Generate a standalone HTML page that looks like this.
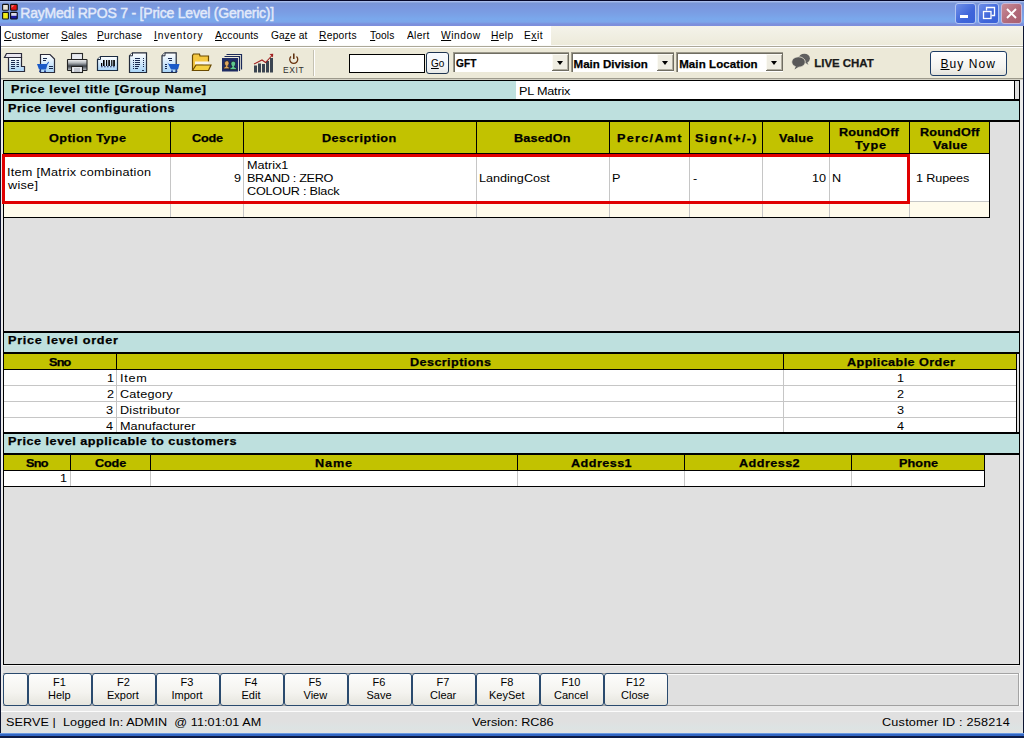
<!DOCTYPE html>
<html><head><meta charset="utf-8">
<style>
*{margin:0;padding:0;box-sizing:border-box}
html,body{width:1024px;height:738px;overflow:hidden;background:#e0e0e0;font-family:"Liberation Sans",sans-serif;font-size:11px;color:#000}
.a{position:absolute}
.x{position:absolute;white-space:pre;line-height:20px}
.blk{position:absolute;background:#000}
.gry{position:absolute;background:#c6c6c6}
.fk{position:absolute;top:673px;height:33px;width:64px;border:1px solid #2a4a6e;border-radius:3px;background:linear-gradient(#fdfdfc,#f4f3ef 60%,#e6e5de)}
.cb{position:absolute;top:52px;height:20px;background:#fff;border-top:1px solid #9c998b;border-left:1px solid #9c998b;box-shadow:inset 1px 1px 0 #6f6d62}
.cbb{position:absolute;top:1px;right:0;width:17px;height:17px;background:#efede2;box-shadow:inset -1px -1px 0 #6f6d62,inset 1px 1px 0 #fbfaf4,inset -2px -2px 0 #b0ad9f}
.cbb:after{content:"";position:absolute;left:5px;top:7px;border-left:3.5px solid transparent;border-right:3.5px solid transparent;border-top:4px solid #000}
</style></head><body>
<div class="a" style="left:0px;top:0px;width:1024px;height:738px;background:#e0e0e0;"></div>
<div class="a" style="left:0px;top:0px;width:1px;height:738px;background:#0c1430;"></div>
<div class="a" style="left:1px;top:26px;width:2px;height:707px;background:#ebebeb;"></div>
<div class="a" style="left:1023px;top:0px;width:1px;height:738px;background:#0c1430;"></div>
<div class="a" style="left:1020px;top:26px;width:3px;height:707px;background:#ebebeb;"></div>
<div class="a" style="left:0px;top:733px;width:1024px;height:1px;background:#6a98e0;"></div>
<div class="a" style="left:0px;top:734px;width:1024px;height:2px;background:#3266c4;"></div>
<div class="a" style="left:0px;top:736px;width:1024px;height:2px;background:#0c1a44;"></div>
<div class="a" style="left:0px;top:0px;width:1024px;height:26px;background:linear-gradient(#06082a 0px,#06082a 1px,#a8bcec 1px,#a8bcec 2px,#8ca6de 2.5px,#7a96d8 3.5px,#7a98e0 8px,#7a9ee4 13px,#7aa8ec 19px,#7ca6ea 22px,#7c90dc 24px,#7c8edc 26px);"></div>
<div class="a" style="left:1px;top:26px;width:1022px;height:21px;background:linear-gradient(#f4f3ea,#ece9d8);"></div>
<div class="a" style="left:1px;top:26px;width:550px;height:19px;background:#fff;"></div>
<div class="a" style="left:1px;top:45px;width:1022px;height:1px;background:#fbfbf8;"></div>
<div class="a" style="left:1px;top:46px;width:1022px;height:1px;background:#aca899;"></div>
<div class="a" style="left:1px;top:47px;width:1022px;height:1px;background:#fff;"></div>
<div class="a" style="left:1px;top:48px;width:1022px;height:31px;background:#ece9d8;"></div>
<div class="a" style="left:1px;top:78px;width:1022px;height:1px;background:#9d9a8c;"></div>
<div class="a" style="left:1px;top:79px;width:1022px;height:1px;background:#d4d2c6;"></div>
<div class="a" style="left:313px;top:50px;width:1px;height:26px;background:#c5c2b2;"></div>
<div class="a" style="left:314px;top:50px;width:1px;height:26px;background:#fff;"></div>
<div class="a" style="left:349px;top:54px;width:76px;height:19px;background:#fff;border:1px solid #000"></div>
<div class="a" style="left:426px;top:52px;width:23px;height:22px;border:1px solid #1e3450;border-radius:3px;background:linear-gradient(#f8fbff,#f2f4f6 70%,#e6e8e6)"></div>
<div class="cb" style="left:453px;width:116px"><div class="cbb"></div></div>
<div class="cb" style="left:571px;width:103px"><div class="cbb"></div></div>
<div class="cb" style="left:676px;width:107px"><div class="cbb"></div></div>
<div class="a" style="left:930px;top:51px;width:77px;height:25px;border:1px solid #1f3d66;border-radius:3px;background:linear-gradient(#fff,#f3f2ee 70%,#e2e1da)"></div>
<!-- app icon -->
<svg class="a" style="left:0;top:0" width="20" height="22" viewBox="0 0 20 22">
<rect x="2.6" y="4.4" width="5.8" height="5.8" rx="0.8" fill="#eae4d8" stroke="#111" stroke-width="1.1"/>
<rect x="10.6" y="4.4" width="6.6" height="5.8" rx="0.8" fill="#e01010" stroke="#111" stroke-width="1.1"/>
<path d="M11.5 5.3h3L11.5 8Z" fill="#f08080"/>
<rect x="2.6" y="12.4" width="5.8" height="6.6" rx="0.8" fill="#f0ec18" stroke="#111" stroke-width="1.1"/>
<rect x="10.6" y="12.4" width="6.6" height="6.6" rx="0.8" fill="#1a1aa0" stroke="#111" stroke-width="1.1"/>
<rect x="11.2" y="13" width="5.4" height="2.8" fill="#dcdce8"/>
</svg>
<!-- title buttons -->
<div class="a" style="left:955px;top:3px;width:21px;height:21px;border:1px solid #b4c6f2;border-radius:3px;background:linear-gradient(135deg,#6f8fe8,#3f66da 60%,#3a62d8)"></div>
<div class="a" style="left:960px;top:15px;width:8px;height:3px;background:#fff"></div>
<div class="a" style="left:978px;top:3px;width:21px;height:21px;border:1px solid #b4c6f2;border-radius:3px;background:linear-gradient(135deg,#6f8fe8,#3f66da 60%,#3a62d8)"></div>
<svg class="a" style="left:978px;top:3px" width="21" height="21" viewBox="0 0 21 21"><path d="M8.5 7.5V4.5H16.5V12.5H13.5" fill="none" stroke="#fff" stroke-width="1.3"/><rect x="5.5" y="8.5" width="7.5" height="7" fill="none" stroke="#fff" stroke-width="1.3"/></svg>
<div class="a" style="left:1001px;top:3px;width:21px;height:21px;border:1px solid #c8b8d8;border-radius:3px;background:linear-gradient(135deg,#c88c98,#b06878 60%,#a86070)"></div>
<svg class="a" style="left:1001px;top:3px" width="21" height="21" viewBox="0 0 21 21"><path d="M6 6L15 15M15 6L6 15" stroke="#fff" stroke-width="1.9"/></svg>

<!-- toolbar icons -->
<svg class="a" style="left:0;top:46px" width="320" height="32" viewBox="0 46 320 32">
<defs>
<linearGradient id="gb" x1="0" y1="0" x2="0" y2="1"><stop offset="0" stop-color="#ffffff"/><stop offset="1" stop-color="#a8d4f8"/></linearGradient>
<linearGradient id="gp" x1="0" y1="0" x2="0" y2="1"><stop offset="0" stop-color="#f4f4f4"/><stop offset="0.3" stop-color="#b4b8bc"/><stop offset="0.6" stop-color="#3c424a"/><stop offset="1" stop-color="#c4c8cc"/></linearGradient>
</defs>
<!-- icon1 scroll -->
<path d="M8.5 57.5H21.5V66.5H24.5V71.5H8.5Z" fill="url(#gb)" stroke="#2a2a3a" stroke-width="1.2"/>
<path d="M6.5 53.5H21.5L21.5 57.5L19 57.5H4.5Z" fill="#e8e6f0" stroke="#2a2a3a" stroke-width="1.2"/>
<g stroke="#1a2a50" stroke-width="1"><path d="M11 60.5h4M16.5 60.5h2.5M11 62.5h4M16.5 62.5h2.5M11 64.5h4M16.5 64.5h2.5M11 66.5h4M16.5 66.5h2.5M11 68.5h4"/></g>
<!-- icon2 doc+cart -->
<path d="M40.5 54.5H50L54.5 59V72.5H40.5Z" fill="url(#gb)" stroke="#2a2a3a" stroke-width="1.2"/>
<g stroke="#1a2a50"><path d="M43 58.5h4M43 60.5h3M49 66.5h4M49 68.5h4"/></g>
<path d="M37 64H46.5L48.5 61.5L49 62.5L47.5 64.5L46 69.5H39Z" fill="#1a5ac8"/>
<circle cx="40" cy="71.3" r="1" fill="#1a3a90"/><circle cx="45" cy="71.3" r="1" fill="#1a3a90"/>
<!-- icon3 printer -->
<rect x="71.5" y="53.5" width="11" height="6.5" fill="#e8eaf0" stroke="#2a2a2a" stroke-width="1.1"/>
<rect x="67.5" y="59.5" width="19.5" height="11" rx="0.5" fill="url(#gp)" stroke="#222" stroke-width="1.1"/>
<rect x="71.5" y="66.5" width="11" height="6" fill="#eef0f4" stroke="#222" stroke-width="1.1"/>
<path d="M74 69h6M74 71h6" stroke="#8890a0" stroke-width="0.8"/>
<!-- icon4 barcode -->
<path d="M100.5 56.5H117.5V70.5H97.5V59.5Z" fill="url(#gb)" stroke="#1a2a40" stroke-width="1.2"/>
<path d="M97.5 59.5H100.5V56.5" fill="#fff" stroke="#1a2a40" stroke-width="1"/>
<g fill="#000"><rect x="101" y="63" width="1.2" height="3"/><rect x="103" y="60" width="1.6" height="6"/><rect x="106" y="60" width="1.2" height="6"/><rect x="108.3" y="60" width="1.6" height="6"/><rect x="111.2" y="60" width="1.2" height="6"/><rect x="113.2" y="60" width="1.7" height="6"/></g>
<path d="M101 66.8h14" stroke="#1a2a60" stroke-width="1.1" stroke-dasharray="1.6 1.4"/>
<!-- icon5 doc list -->
<path d="M132.5 52.8H146.5V72.5H129.5V55.8Z" fill="url(#gb)" stroke="#222a3a" stroke-width="1.2"/>
<path d="M129.5 55.8H132.5V52.8" fill="#fff" stroke="#222a3a" stroke-width="1"/>
<g stroke="#1a2a50"><path d="M135 58.5h5M135 60.5h5M135 62.5h5M135 64.5h5M135 66.5h4M135 68.5h3"/><path d="M133 60.5h1M133 62.5h1M133 64.5h1M133 66.5h1M133 68.5h1M143 58.5h1M143 60.5h1M143 62.5h1M143 64.5h1M143 66.5h1M142 70.5h2"/></g>
<!-- icon6 doc+cart -->
<path d="M165 52.8H176.2V72.5H162V55.8Z" fill="url(#gb)" stroke="#222a3a" stroke-width="1.2"/>
<path d="M162 55.8H165V52.8" fill="#fff" stroke="#222a3a" stroke-width="1"/>
<g stroke="#1a2a50"><path d="M168 58.5h4M169 60.5h3M165 64.5h2M165 66.5h2M165 68.5h2"/></g>
<path d="M167.5 62.5L169 64H179.5L178 69.5H171Z" fill="#1a5ac8"/>
<circle cx="172" cy="71.3" r="1" fill="#1a3a90"/><circle cx="176.5" cy="71.3" r="1" fill="#1a3a90"/>
<!-- icon7 folder -->
<path d="M192.5 70.5V55.5L193.5 54H199.5L200 56H208.5V61.5" fill="#f5c842" stroke="#6a4a00" stroke-width="1.2"/>
<path d="M195 61.5H208.5V64.5H195Z" fill="#f8f4ec"/>
<path d="M192.5 70.5L196 65H211L208.5 70.5Z" fill="#f5d040" stroke="#6a4a00" stroke-width="1.2"/>
<!-- icon8 contacts -->
<path d="M226.5 54.5H241.5V69.5" fill="none" stroke="#1c2a5a" stroke-width="1.2"/>
<path d="M224.5 56.5H239.5V71" fill="none" stroke="#1c2a5a" stroke-width="1.2"/>
<rect x="222" y="58" width="16" height="13.5" fill="#1e2c66"/>
<path d="M227 60.8C225.4 60.8 224.6 62 224.6 63.4C224.6 64.6 225.2 65.4 225.8 65.8L225.6 66.6C224.6 66.8 223.6 67.6 223.4 68.8H229.8C229.6 67.6 228.6 66.8 227.8 66.6L227.6 65.8C228.4 65.4 229 64.6 229 63.4C229 62 228.4 60.8 227 60.8Z" fill="#e0a860" stroke="#101010" stroke-width="0.6"/>
<path d="M233.2 61.2C231.6 61.2 230.9 62.4 230.9 63.8C230.9 65 231.5 65.8 232.1 66.2L231.9 67.2C230.8 67.4 229.8 68.2 229.6 69.6H236.8C236.6 68.2 235.6 67.4 234.5 67.2L234.3 66.2C235 65.8 235.6 65 235.6 63.8C235.6 62.4 234.9 61.2 233.2 61.2Z" fill="#5cc890" stroke="#101010" stroke-width="0.6"/>
<!-- icon9 chart -->
<g fill="#3a4450"><rect x="254" y="65.5" width="3" height="7"/><rect x="258" y="63.5" width="3" height="9"/><rect x="262" y="64" width="3" height="8.5"/><rect x="266" y="61" width="3" height="11.5"/><rect x="270" y="58" width="3" height="14.5"/></g>
<path d="M254 64L262 60L265.5 62.5L272 55.5" fill="none" stroke="#a02020" stroke-width="1.1"/>
<path d="M269.5 54L273.2 53.8L273 57.5Z" fill="#a02020"/>
<!-- icon10 exit -->
<path d="M291 56.5A4 4 0 1 0 296.5 56.5" fill="none" stroke="#6a3410" stroke-width="1.3"/>
<path d="M293.8 53.5V59" stroke="#5a2a08" stroke-width="1.5"/>
</svg>
<!-- chat icon -->
<svg class="a" style="left:790px;top:52px" width="22" height="20" viewBox="0 0 22 20">
<ellipse cx="14.3" cy="6.5" rx="5.6" ry="4.8" fill="#606060"/>
<path d="M17 10L18.5 13L15 10.5Z" fill="#606060"/>
<ellipse cx="8.5" cy="10" rx="6.8" ry="5.2" fill="#585858" stroke="#ece9d8" stroke-width="0.8"/>
<path d="M6 14L4.5 17.5L9 14.5Z" fill="#585858"/>
</svg>


<div class="blk" style="left:3px;top:80px;width:1017px;height:1px"></div>
<div class="blk" style="left:3px;top:80px;width:1px;height:585px"></div>
<div class="blk" style="left:1019px;top:80px;width:1px;height:585px"></div>
<div class="blk" style="left:3px;top:664px;width:1017px;height:1px"></div>
<div class="a" style="left:4px;top:81px;width:512px;height:18px;background:#bee0de;"></div>
<div class="a" style="left:516px;top:81px;width:498px;height:18px;background:#fff;"></div>
<div class="blk" style="left:1014px;top:81px;width:1px;height:18px"></div>
<div class="a" style="left:1015px;top:81px;width:4px;height:18px;background:#e0e0e0;"></div>
<div class="blk" style="left:3px;top:99px;width:1017px;height:2px"></div>
<div class="a" style="left:4px;top:101px;width:1015px;height:19px;background:#bee0de;"></div>
<div class="blk" style="left:3px;top:120px;width:1017px;height:2px"></div>
<div class="a" style="left:4px;top:122px;width:985px;height:31px;background:#c2c200;"></div>
<div class="blk" style="left:170px;top:122px;width:1px;height:32px"></div>
<div class="blk" style="left:243px;top:122px;width:1px;height:32px"></div>
<div class="blk" style="left:476px;top:122px;width:1px;height:32px"></div>
<div class="blk" style="left:609px;top:122px;width:1px;height:32px"></div>
<div class="blk" style="left:689px;top:122px;width:1px;height:32px"></div>
<div class="blk" style="left:762px;top:122px;width:1px;height:32px"></div>
<div class="blk" style="left:829px;top:122px;width:1px;height:32px"></div>
<div class="blk" style="left:909px;top:122px;width:1px;height:32px"></div>
<div class="blk" style="left:989px;top:122px;width:1px;height:32px"></div>
<div class="blk" style="left:3px;top:153px;width:987px;height:1px"></div>
<div class="a" style="left:4px;top:154px;width:985px;height:47px;background:#fff;"></div>
<div class="a" style="left:4px;top:202px;width:985px;height:15px;background:#fffbec;"></div>
<div class="gry" style="left:170px;top:154px;width:1px;height:63px"></div>
<div class="gry" style="left:243px;top:154px;width:1px;height:63px"></div>
<div class="gry" style="left:476px;top:154px;width:1px;height:63px"></div>
<div class="gry" style="left:609px;top:154px;width:1px;height:63px"></div>
<div class="gry" style="left:689px;top:154px;width:1px;height:63px"></div>
<div class="gry" style="left:762px;top:154px;width:1px;height:63px"></div>
<div class="gry" style="left:829px;top:154px;width:1px;height:63px"></div>
<div class="gry" style="left:909px;top:154px;width:1px;height:63px"></div>
<div class="gry" style="left:4px;top:201px;width:985px;height:1px"></div>
<div class="blk" style="left:989px;top:121px;width:1px;height:97px"></div>
<div class="blk" style="left:3px;top:217px;width:987px;height:1px"></div>
<div class="a" style="left:2px;top:154px;width:908px;height:50px;border:3px solid #e00000"></div>
<div class="blk" style="left:3px;top:331px;width:1017px;height:2px"></div>
<div class="a" style="left:4px;top:333px;width:1015px;height:19px;background:#bee0de;"></div>
<div class="blk" style="left:3px;top:352px;width:1017px;height:2px"></div>
<div class="a" style="left:4px;top:354px;width:1012px;height:15px;background:#c2c200;"></div>
<div class="blk" style="left:116px;top:354px;width:1px;height:15px"></div>
<div class="blk" style="left:783px;top:354px;width:1px;height:15px"></div>
<div class="blk" style="left:1016px;top:354px;width:1px;height:15px"></div>
<div class="blk" style="left:3px;top:369px;width:1014px;height:1px"></div>
<div class="a" style="left:4px;top:370px;width:1012px;height:62px;background:#fff;"></div>
<div class="gry" style="left:4px;top:385px;width:1012px;height:1px"></div>
<div class="gry" style="left:4px;top:401px;width:1012px;height:1px"></div>
<div class="gry" style="left:4px;top:417px;width:1012px;height:1px"></div>
<div class="gry" style="left:116px;top:370px;width:1px;height:62px"></div>
<div class="gry" style="left:783px;top:370px;width:1px;height:62px"></div>
<div class="blk" style="left:1016px;top:353px;width:1px;height:80px"></div>
<div class="blk" style="left:3px;top:432px;width:1017px;height:2px"></div>
<div class="a" style="left:4px;top:434px;width:1015px;height:19px;background:#bee0de;"></div>
<div class="blk" style="left:3px;top:453px;width:1017px;height:2px"></div>
<div class="a" style="left:4px;top:455px;width:980px;height:15px;background:#c2c200;"></div>
<div class="blk" style="left:70px;top:455px;width:1px;height:15px"></div>
<div class="blk" style="left:150px;top:455px;width:1px;height:15px"></div>
<div class="blk" style="left:517px;top:455px;width:1px;height:15px"></div>
<div class="blk" style="left:684px;top:455px;width:1px;height:15px"></div>
<div class="blk" style="left:851px;top:455px;width:1px;height:15px"></div>
<div class="blk" style="left:984px;top:455px;width:1px;height:15px"></div>
<div class="blk" style="left:3px;top:470px;width:982px;height:1px"></div>
<div class="a" style="left:4px;top:471px;width:980px;height:15px;background:#fff;"></div>
<div class="gry" style="left:70px;top:471px;width:1px;height:15px"></div>
<div class="gry" style="left:150px;top:471px;width:1px;height:15px"></div>
<div class="gry" style="left:517px;top:471px;width:1px;height:15px"></div>
<div class="gry" style="left:684px;top:471px;width:1px;height:15px"></div>
<div class="gry" style="left:851px;top:471px;width:1px;height:15px"></div>
<div class="blk" style="left:984px;top:454px;width:1px;height:33px"></div>
<div class="blk" style="left:3px;top:486px;width:982px;height:1px"></div>
<div class="a" style="left:3px;top:665px;width:1016px;height:1px;background:#f4f4f4;"></div>
<div class="a" style="left:3px;top:673px;width:1016px;height:1px;background:#a4a4a4;"></div>
<div class="a" style="left:3px;top:674px;width:1016px;height:1px;background:#fafafa;"></div>
<div class="a" style="left:1018px;top:673px;width:1px;height:33px;background:#a4a4a4;"></div>
<div class="a" style="left:1019px;top:673px;width:1px;height:34px;background:#fafafa;"></div>
<div class="a" style="left:3px;top:705px;width:1016px;height:1px;background:#a0a0a0;"></div>
<div class="a" style="left:3px;top:706px;width:1017px;height:5px;background:#e8e8e8;"></div>
<div class="fk" style="left:3px;width:25px"></div>
<div class="fk" style="left:28px"></div>
<div class="fk" style="left:92px"></div>
<div class="fk" style="left:156px"></div>
<div class="fk" style="left:220px"></div>
<div class="fk" style="left:284px"></div>
<div class="fk" style="left:348px"></div>
<div class="fk" style="left:412px"></div>
<div class="fk" style="left:476px"></div>
<div class="fk" style="left:540px"></div>
<div class="fk" style="left:604px"></div>
<div class="a" style="left:1px;top:711px;width:1022px;height:1px;background:#fcfcfc;"></div>
<div class="a" style="left:1px;top:712px;width:1022px;height:21px;background:linear-gradient(#e0e0e0 0,#e0e0e0 10px,#dde3e3 16px,#e2e2e0 21px);"></div>
<div class="x" style="left:20.30px;top:3.00px;font-size:14px;color:#e2eafa;letter-spacing:-0.213px;-webkit-text-stroke:0.45px #e2eafa;">RayMedi RPOS 7 - [Price Level (Generic)]</div>
<div class="x" style="left:3.90px;top:25.00px;font-size:11px;letter-spacing:0.138px;transform:scaleX(0.93);transform-origin:0 0;"><u>C</u>ustomer</div>
<div class="x" style="left:60.80px;top:25.00px;font-size:11px;letter-spacing:0.161px;transform:scaleX(0.93);transform-origin:0 0;"><u>S</u>ales</div>
<div class="x" style="left:97.40px;top:25.00px;font-size:11px;letter-spacing:0.276px;transform:scaleX(0.93);transform-origin:0 0;"><u>P</u>urchase</div>
<div class="x" style="left:153.70px;top:25.00px;font-size:11px;letter-spacing:0.874px;transform:scaleX(0.93);transform-origin:0 0;"><u>I</u>nventory</div>
<div class="x" style="left:215.00px;top:25.00px;font-size:11px;letter-spacing:0.215px;transform:scaleX(0.93);transform-origin:0 0;"><u>A</u>ccounts</div>
<div class="x" style="left:270.60px;top:25.00px;font-size:11px;letter-spacing:0.108px;transform:scaleX(0.93);transform-origin:0 0;">Ga<u>z</u>e at</div>
<div class="x" style="left:319.20px;top:25.00px;font-size:11px;letter-spacing:0.305px;transform:scaleX(0.93);transform-origin:0 0;"><u>R</u>eports</div>
<div class="x" style="left:370.00px;top:25.00px;font-size:11px;letter-spacing:0.134px;transform:scaleX(0.93);transform-origin:0 0;"><u>T</u>ools</div>
<div class="x" style="left:406.80px;top:25.00px;font-size:11px;letter-spacing:0.323px;transform:scaleX(0.93);transform-origin:0 0;">Alert</div>
<div class="x" style="left:441.30px;top:25.00px;font-size:11px;letter-spacing:0.581px;transform:scaleX(0.93);transform-origin:0 0;"><u>W</u>indow</div>
<div class="x" style="left:490.60px;top:25.00px;font-size:11px;letter-spacing:0.394px;transform:scaleX(0.93);transform-origin:0 0;"><u>H</u>elp</div>
<div class="x" style="left:523.60px;top:25.00px;font-size:11px;letter-spacing:0.573px;transform:scaleX(0.93);transform-origin:0 0;">E<u>x</u>it</div>
<div class="x" style="left:282.90px;top:60.00px;font-size:8.5px;color:#303030;letter-spacing:0.6px;">EXIT</div>
<div class="x" style="left:455.80px;top:53.00px;font-size:11.5px;font-weight:bold;-webkit-text-stroke:0.25px;letter-spacing:0.114px;transform:scaleX(0.88);transform-origin:0 0;">GFT</div>
<div class="x" style="left:573.60px;top:53.50px;font-size:11.5px;font-weight:bold;-webkit-text-stroke:0.25px;">Main Division</div>
<div class="x" style="left:679.20px;top:53.50px;font-size:11.5px;font-weight:bold;-webkit-text-stroke:0.25px;letter-spacing:0.092px;">Main Location</div>
<div class="x" style="left:814.30px;top:52.60px;font-size:11.5px;font-weight:bold;-webkit-text-stroke:0.25px;color:#1a1a1a;letter-spacing:-0.05px;">LIVE CHAT</div>
<div class="x" style="left:940.50px;top:53.50px;font-size:12px;letter-spacing:1.067px;"><u>B</u>uy Now</div>
<div class="x" style="left:431.00px;top:54.00px;font-size:10px;"><u>G</u>o</div>
<div class="x" style="left:10.80px;top:79.30px;font-size:11.5px;font-weight:bold;-webkit-text-stroke:0.25px;letter-spacing:0.583px;transform:scaleX(1.1);transform-origin:0 0;">Price level title [Group Name]</div>
<div class="x" style="left:518.90px;top:80.90px;font-size:11.5px;letter-spacing:-0.182px;transform:scaleX(1.1);transform-origin:0 0;">PL Matrix</div>
<div class="x" style="left:7.60px;top:97.80px;font-size:11.5px;font-weight:bold;-webkit-text-stroke:0.25px;letter-spacing:0.458px;transform:scaleX(1.1);transform-origin:0 0;">Price level configurations</div>
<div class="x" style="left:48.80px;top:128.00px;font-size:11.5px;font-weight:bold;-webkit-text-stroke:0.25px;letter-spacing:0.373px;transform:scaleX(1.1);transform-origin:0 0;">Option Type</div>
<div class="x" style="left:191.50px;top:128.00px;font-size:11.5px;font-weight:bold;-webkit-text-stroke:0.25px;letter-spacing:-0.152px;transform:scaleX(1.1);transform-origin:0 0;">Code</div>
<div class="x" style="left:322.40px;top:128.00px;font-size:11.5px;font-weight:bold;-webkit-text-stroke:0.25px;letter-spacing:0.427px;transform:scaleX(1.1);transform-origin:0 0;">Description</div>
<div class="x" style="left:514.10px;top:128.00px;font-size:11.5px;font-weight:bold;-webkit-text-stroke:0.25px;letter-spacing:0.136px;transform:scaleX(1.1);transform-origin:0 0;">BasedOn</div>
<div class="x" style="left:617.00px;top:128.00px;font-size:11.5px;font-weight:bold;-webkit-text-stroke:0.25px;letter-spacing:1.169px;transform:scaleX(1.1);transform-origin:0 0;">Perc/Amt</div>
<div class="x" style="left:695.40px;top:128.00px;font-size:11.5px;font-weight:bold;-webkit-text-stroke:0.25px;letter-spacing:1.205px;transform:scaleX(1.1);transform-origin:0 0;">Sign(+/-)</div>
<div class="x" style="left:779.00px;top:128.00px;font-size:11.5px;font-weight:bold;-webkit-text-stroke:0.25px;letter-spacing:0.273px;transform:scaleX(1.1);transform-origin:0 0;">Value</div>
<div class="x" style="left:839.00px;top:122.00px;font-size:11.5px;font-weight:bold;-webkit-text-stroke:0.25px;letter-spacing:0.195px;transform:scaleX(1.1);transform-origin:0 0;">RoundOff</div>
<div class="x" style="left:854.60px;top:135.00px;font-size:11.5px;font-weight:bold;-webkit-text-stroke:0.25px;letter-spacing:0.727px;transform:scaleX(1.1);transform-origin:0 0;">Type</div>
<div class="x" style="left:919.50px;top:122.00px;font-size:11.5px;font-weight:bold;-webkit-text-stroke:0.25px;letter-spacing:0.156px;transform:scaleX(1.1);transform-origin:0 0;">RoundOff</div>
<div class="x" style="left:932.90px;top:135.00px;font-size:11.5px;font-weight:bold;-webkit-text-stroke:0.25px;letter-spacing:0.295px;transform:scaleX(1.1);transform-origin:0 0;">Value</div>
<div class="x" style="left:6.80px;top:162.00px;font-size:11.5px;letter-spacing:0.245px;transform:scaleX(1.1);transform-origin:0 0;">Item [Matrix combination</div>
<div class="x" style="left:7.80px;top:175.00px;font-size:11.5px;letter-spacing:0.245px;transform:scaleX(1.1);transform-origin:0 0;">wise]</div>
<div class="x" style="left:233.60px;top:168.00px;font-size:11.5px;transform:scaleX(1.1);transform-origin:0 0;">9</div>
<div class="x" style="left:246.80px;top:155.00px;font-size:11.5px;letter-spacing:-0.03px;transform:scaleX(1.1);transform-origin:0 0;">Matrix1</div>
<div class="x" style="left:246.80px;top:168.00px;font-size:11.5px;letter-spacing:-0.298px;transform:scaleX(1.1);transform-origin:0 0;">BRAND : ZERO</div>
<div class="x" style="left:246.80px;top:180.60px;font-size:11.5px;letter-spacing:-0.21px;transform:scaleX(1.1);transform-origin:0 0;">COLOUR : Black</div>
<div class="x" style="left:479.20px;top:168.00px;font-size:11.5px;letter-spacing:-0.018px;transform:scaleX(1.1);transform-origin:0 0;">LandingCost</div>
<div class="x" style="left:612.40px;top:168.00px;font-size:11.5px;transform:scaleX(1.1);transform-origin:0 0;">P</div>
<div class="x" style="left:693.00px;top:168.00px;font-size:11.5px;transform:scaleX(1.1);transform-origin:0 0;">-</div>
<div class="x" style="left:812.20px;top:168.00px;font-size:11.5px;letter-spacing:-0.091px;transform:scaleX(1.1);transform-origin:0 0;">10</div>
<div class="x" style="left:832.40px;top:168.00px;font-size:11.5px;transform:scaleX(1.1);transform-origin:0 0;">N</div>
<div class="x" style="left:916.30px;top:168.00px;font-size:11.5px;letter-spacing:-0.117px;transform:scaleX(1.1);transform-origin:0 0;">1 Rupees</div>
<div class="x" style="left:7.50px;top:330.00px;font-size:11.5px;font-weight:bold;-webkit-text-stroke:0.25px;letter-spacing:0.653px;transform:scaleX(1.1);transform-origin:0 0;">Price level order</div>
<div class="x" style="left:48.80px;top:352.00px;font-size:11.5px;font-weight:bold;-webkit-text-stroke:0.25px;letter-spacing:-0.727px;transform:scaleX(1.1);transform-origin:0 0;">Sno</div>
<div class="x" style="left:409.80px;top:352.00px;font-size:11.5px;font-weight:bold;-webkit-text-stroke:0.25px;letter-spacing:0.355px;transform:scaleX(1.1);transform-origin:0 0;">Descriptions</div>
<div class="x" style="left:847.10px;top:352.00px;font-size:11.5px;font-weight:bold;-webkit-text-stroke:0.25px;letter-spacing:0.37px;transform:scaleX(1.1);transform-origin:0 0;">Applicable Order</div>
<div class="x" style="left:106.70px;top:368.00px;font-size:11.5px;transform:scaleX(1.1);transform-origin:0 0;">1</div>
<div class="x" style="left:119.70px;top:368.00px;font-size:11.5px;letter-spacing:0.667px;transform:scaleX(1.1);transform-origin:0 0;">Item</div>
<div class="x" style="left:897.00px;top:368.00px;font-size:11.5px;transform:scaleX(1.1);transform-origin:0 0;">1</div>
<div class="x" style="left:106.70px;top:384.00px;font-size:11.5px;transform:scaleX(1.1);transform-origin:0 0;">2</div>
<div class="x" style="left:119.70px;top:384.00px;font-size:11.5px;letter-spacing:0.169px;transform:scaleX(1.1);transform-origin:0 0;">Category</div>
<div class="x" style="left:897.00px;top:384.00px;font-size:11.5px;transform:scaleX(1.1);transform-origin:0 0;">2</div>
<div class="x" style="left:105.70px;top:400.00px;font-size:11.5px;transform:scaleX(1.1);transform-origin:0 0;">3</div>
<div class="x" style="left:119.70px;top:400.00px;font-size:11.5px;letter-spacing:0.209px;transform:scaleX(1.1);transform-origin:0 0;">Distributor</div>
<div class="x" style="left:896.50px;top:400.00px;font-size:11.5px;transform:scaleX(1.1);transform-origin:0 0;">3</div>
<div class="x" style="left:105.70px;top:416.00px;font-size:11.5px;transform:scaleX(1.1);transform-origin:0 0;">4</div>
<div class="x" style="left:119.70px;top:416.00px;font-size:11.5px;letter-spacing:0.074px;transform:scaleX(1.1);transform-origin:0 0;">Manufacturer</div>
<div class="x" style="left:897.00px;top:416.00px;font-size:11.5px;transform:scaleX(1.1);transform-origin:0 0;">4</div>
<div class="x" style="left:7.50px;top:431.00px;font-size:11.5px;font-weight:bold;-webkit-text-stroke:0.25px;letter-spacing:0.468px;transform:scaleX(1.1);transform-origin:0 0;">Price level applicable to customers</div>
<div class="x" style="left:25.60px;top:453.00px;font-size:11.5px;font-weight:bold;-webkit-text-stroke:0.25px;letter-spacing:-0.591px;transform:scaleX(1.1);transform-origin:0 0;">Sno</div>
<div class="x" style="left:95.00px;top:453.00px;font-size:11.5px;font-weight:bold;-webkit-text-stroke:0.25px;letter-spacing:-0.121px;transform:scaleX(1.1);transform-origin:0 0;">Code</div>
<div class="x" style="left:315.00px;top:453.00px;font-size:11.5px;font-weight:bold;-webkit-text-stroke:0.25px;letter-spacing:0.788px;transform:scaleX(1.1);transform-origin:0 0;">Name</div>
<div class="x" style="left:571.00px;top:453.00px;font-size:11.5px;font-weight:bold;-webkit-text-stroke:0.25px;letter-spacing:0.39px;transform:scaleX(1.1);transform-origin:0 0;">Address1</div>
<div class="x" style="left:738.70px;top:453.00px;font-size:11.5px;font-weight:bold;-webkit-text-stroke:0.25px;letter-spacing:0.39px;transform:scaleX(1.1);transform-origin:0 0;">Address2</div>
<div class="x" style="left:899.00px;top:453.00px;font-size:11.5px;font-weight:bold;-webkit-text-stroke:0.25px;letter-spacing:0.091px;transform:scaleX(1.1);transform-origin:0 0;">Phone</div>
<div class="x" style="left:60.30px;top:468.00px;font-size:11.5px;transform:scaleX(1.1);transform-origin:0 0;">1</div>
<div class="x" style="left:53.00px;top:672.00px;font-size:11px;">F1</div>
<div class="x" style="left:48.00px;top:685.00px;font-size:11px;">Help</div>
<div class="x" style="left:117.00px;top:672.00px;font-size:11px;">F2</div>
<div class="x" style="left:107.00px;top:685.00px;font-size:11px;">Export</div>
<div class="x" style="left:180.50px;top:672.00px;font-size:11px;">F3</div>
<div class="x" style="left:171.50px;top:685.00px;font-size:11px;">Import</div>
<div class="x" style="left:244.50px;top:672.00px;font-size:11px;">F4</div>
<div class="x" style="left:241.50px;top:685.00px;font-size:11px;">Edit</div>
<div class="x" style="left:308.50px;top:672.00px;font-size:11px;">F5</div>
<div class="x" style="left:303.50px;top:685.00px;font-size:11px;">View</div>
<div class="x" style="left:372.50px;top:672.00px;font-size:11px;">F6</div>
<div class="x" style="left:366.50px;top:685.00px;font-size:11px;">Save</div>
<div class="x" style="left:436.50px;top:672.00px;font-size:11px;">F7</div>
<div class="x" style="left:430.00px;top:685.00px;font-size:11px;">Clear</div>
<div class="x" style="left:500.50px;top:672.00px;font-size:11px;">F8</div>
<div class="x" style="left:489.00px;top:685.00px;font-size:11px;">KeySet</div>
<div class="x" style="left:561.50px;top:672.00px;font-size:11px;">F10</div>
<div class="x" style="left:554.00px;top:685.00px;font-size:11px;">Cancel</div>
<div class="x" style="left:626.00px;top:672.00px;font-size:11px;">F12</div>
<div class="x" style="left:621.00px;top:685.00px;font-size:11px;">Close</div>
<div class="x" style="left:5.80px;top:712.00px;font-size:11.5px;letter-spacing:0.047px;transform:scaleX(1.1);transform-origin:0 0;">SERVE |  Logged In: ADMIN  @ 11:01:01 AM</div>
<div class="x" style="left:472.30px;top:712.00px;font-size:11.5px;letter-spacing:-0.008px;transform:scaleX(1.1);transform-origin:0 0;">Version: RC86</div>
<div class="x" style="left:881.80px;top:712.00px;font-size:11.5px;letter-spacing:0.191px;transform:scaleX(1.1);transform-origin:0 0;">Customer ID : 258214</div>
</body></html>
